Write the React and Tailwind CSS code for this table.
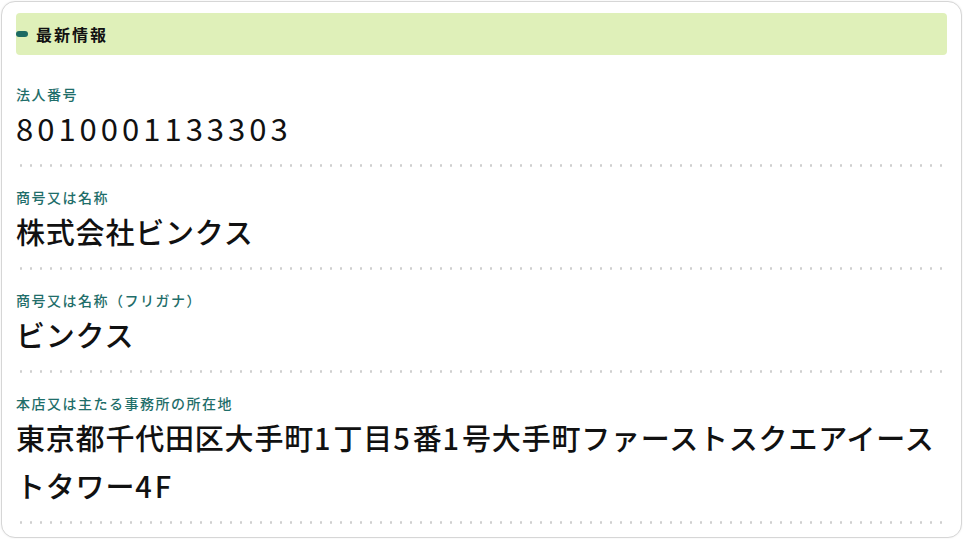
export default function App() {
  const rows = [
    { label: "法人番号", value: ["8010001133303"], num: true },
    { label: "商号又は名称", value: ["株式会社ビンクス"] },
    { label: "商号又は名称（フリガナ）", value: ["ビンクス"] },
    { label: "本店又は主たる事務所の所在地", value: ["東京都千代田区大手町", "1", "丁目", "5", "番", "1", "号大手町ファーストスクエアイーストタワー", "4", "F"] },
  ];
  return (
    <div className="w-[963px] h-[539px] bg-white p-px" style={{ fontFamily: '"Noto Sans CJK JP", "Noto Sans", sans-serif' }}>
      <div className="h-[537px] rounded-[14px] border border-[#d6d6d6] bg-white px-[14px] pt-[11px] shadow-[0_0_2px_rgba(0,0,0,0.08)]">
        <div className="h-[42px] rounded-[4px] bg-[#dff0b9] flex items-center">
          <span className="w-[12px] h-[6px] rounded-full bg-[#1d6b63]" />
          <span className="ml-[8px] text-[16px] font-bold tracking-[2px] text-[#111] leading-none">最新情報</span>
        </div>
        <div className="pt-[29px]">
          {rows.map((r, i) => (
            <div key={i} className={i > 0 ? "pt-[20px]" : ""}>
              <div className="text-[14px] font-medium leading-[20px] text-[#1f6e6a] tracking-[1.5px]">{r.label}</div>
              <div
                className={
                  r.num
                    ? "text-[31px] font-normal leading-[48px] text-[#111] tracking-[4px]"
                    : "text-[29px] font-medium leading-[48px] text-[#111] tracking-[0.8px]"
                }
              >
                {r.value.map((v, j) =>
                  !r.num && /^[0-9F]+$/.test(v) ? (
                    <span key={j} className="tracking-[3px]">{v}</span>
                  ) : (
                    <span key={j}>{v}</span>
                  )
                )}
              </div>
              <div className="mt-[12px] h-[3px] bg-[radial-gradient(circle,#cfcfcf_1px,transparent_1.5px)] bg-[length:10px_3px] bg-repeat-x" />
            </div>
          ))}
        </div>
      </div>
    </div>
  );
}
